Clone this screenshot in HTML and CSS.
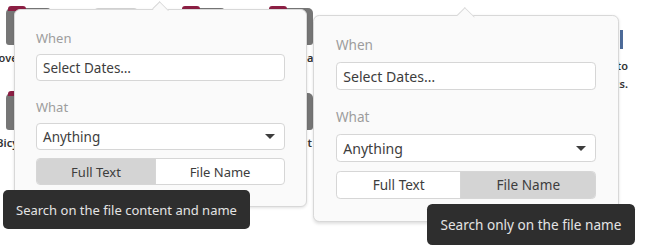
FILE: index.html
```html
<!DOCTYPE html>
<html lang="en">
  <head>
    <meta charset="UTF-8" />
    <title>Search Filters</title>
    <link rel="stylesheet" href="styles.css">
  </head>
  <body>
    <!-- Files view behind the popovers -->
    <div class="files">
      <div class="file"><div class="file-icon"></div><div class="file-name one-line">Dovetail plans</div></div>
      <div class="file"><div class="file-icon doc"></div><div class="file-name">notes</div></div>
      <div class="file"><div class="file-icon"></div><div class="file-name">Music</div></div>
      <div class="file"><div class="file-icon"></div><div class="file-name">Pictures at home</div></div>
      <div class="file empty"></div>
      <div class="file empty"></div>
      <div class="file empty"></div>
      <div class="file edge"><div class="edge-line"></div><div class="file-name edge-name">Go to<br>links.</div></div>
      <div class="file"><div class="file-icon"></div><div class="file-name">Bicycle docs</div></div>
      <div class="file"><div class="file-icon"></div><div class="file-name">Videos</div></div>
      <div class="file"><div class="file-icon"></div><div class="file-name">Work</div></div>
      <div class="file"><div class="file-icon"></div><div class="file-name">Project t</div></div>
    </div>

    <!-- Left popover: Full Text selected -->
    <div class="shot shot-left">
      <div class="popover">
        <div class="field">
          <div class="field-label">When</div>
          <div class="entry">Select Dates…</div>
        </div>
        <div class="field">
          <div class="field-label">What</div>
          <div class="entry combo">Anything<span class="combo-arrow"></span></div>
          <div class="toggle">
            <div class="toggle-btn active">Full Text</div>
            <div class="toggle-btn">File Name</div>
          </div>
        </div>
      </div>
      <div class="tooltip tooltip-left">Search on the file content and name</div>
    </div>

    <!-- Right popover: File Name selected -->
    <div class="shot shot-right">
      <div class="shot-inner">
        <div class="popover">
          <div class="field">
            <div class="field-label">When</div>
            <div class="entry">Select Dates…</div>
          </div>
          <div class="field">
            <div class="field-label">What</div>
            <div class="entry combo">Anything<span class="combo-arrow"></span></div>
            <div class="toggle">
              <div class="toggle-btn">Full Text</div>
              <div class="toggle-btn active">File Name</div>
            </div>
          </div>
        </div>
        <div class="tooltip tooltip-right">Search only on the file name</div>
      </div>
    </div>
  </body>
</html>
```

FILE: styles.css
```css
/* Reset & Base */
* {
  box-sizing: border-box;
  margin: 0;
  padding: 0;
}
html,
body {
  width: 650px;
  height: 250px;
  overflow: hidden;
  background: #fff;
  font-family: "Noto Sans", sans-serif;
}
body {
  position: relative;
}
/* Files grid in the background */
.files {
  display: grid;
  grid-template-columns: repeat(8, 87px);
  grid-auto-rows: 85px;
  margin-left: -15px;
  padding-top: 8px;
}
.file {
  display: flex;
  flex-direction: column;
  align-items: center;
}
.file-icon {
  position: relative;
  width: 46px;
  height: 37px;
  border-radius: 5px 5px 3px 3px;
  background: #767676;
}
/* Folder tab */
.file-icon::before {
  content: "";
  position: absolute;
  top: -2px;
  left: 2px;
  width: 18px;
  height: 5px;
  border-radius: 3px 3px 0 0;
  background: #8c1f44;
}
.file-icon.doc {
  background: #fff;
  border: 1px solid #d4d4d4;
}
.file-icon.doc::before {
  display: none;
}
.file-name {
  width: 70px;
  margin-top: 5px;
  font-size: 11px;
  line-height: 15px;
  font-weight: 600;
  color: #333;
  text-align: center;
}
.file-name.one-line {
  width: auto;
  white-space: nowrap;
}
/* Item cut by the right popover */
.file.edge {
  align-items: flex-start;
}
.edge-line {
  width: 3px;
  height: 35px;
  margin: 22px 0 0 26px;
  background: #4d6b99;
}
.edge-name {
  width: 34px;
  margin-top: 8px;
  line-height: 18px;
  text-align: right;
}
/* Popover groups */
.shot {
  position: absolute;
}
.shot-left {
  left: 14px;
  top: 9px;
}
.shot-right {
  left: 313px;
  top: 15px;
}
.shot-inner {
  position: relative;
  zoom: 1.045;
}
.popover {
  position: relative;
  width: 293px;
  padding: 19px 21px 21px;
  background: #fafafa;
  border: 1px solid #d8d8d8;
  border-radius: 6px;
  box-shadow: 0 1px 3px rgba(0, 0, 0, 0.12);
}
/* Arrow pointing up */
.popover::before {
  content: "";
  position: absolute;
  top: -7px;
  left: 139px;
  width: 12px;
  height: 12px;
  background: #fafafa;
  border-top: 1px solid #d8d8d8;
  border-left: 1px solid #d8d8d8;
  transform: rotate(45deg) scaleY(0.8);
}
.field + .field {
  margin-top: 17px;
}
.field-label {
  font-size: 13px;
  line-height: 18px;
  color: #9d9d9d;
  margin-bottom: 7px;
}
.entry {
  height: 27px;
  display: flex;
  align-items: center;
  padding: 0 6px;
  background: #fff;
  border: 1px solid #d6d6d6;
  border-radius: 4px;
  font-size: 13.5px;
  color: #3d3d3d;
}
.combo {
  justify-content: space-between;
}
.combo-arrow {
  width: 0;
  height: 0;
  margin-right: 3px;
  border-left: 5px solid transparent;
  border-right: 5px solid transparent;
  border-top: 5px solid #3d3d3d;
}
/* Full Text / File Name toggle */
.toggle {
  display: grid;
  grid-template-columns: 120fr 131fr;
  height: 27px;
  margin-top: 8px;
  background: #fff;
  border: 1px solid #d6d6d6;
  border-radius: 4px;
  overflow: hidden;
}
.toggle-btn {
  display: flex;
  align-items: center;
  justify-content: center;
  font-size: 13px;
  color: #3d3d3d;
}
.toggle-btn + .toggle-btn {
  border-left: 1px solid #d6d6d6;
}
.toggle-btn.active {
  background: #d4d4d4;
}
/* Tooltips */
.tooltip {
  position: absolute;
  top: 181px;
  height: 39px;
  display: flex;
  align-items: center;
  padding: 0 13px;
  background: #2e2e2e;
  border-radius: 5px;
  color: #e4e4e4;
  font-size: 13px;
  white-space: nowrap;
}
.tooltip-left {
  left: -11px;
}
.tooltip-right {
  left: 109px;
}
```
